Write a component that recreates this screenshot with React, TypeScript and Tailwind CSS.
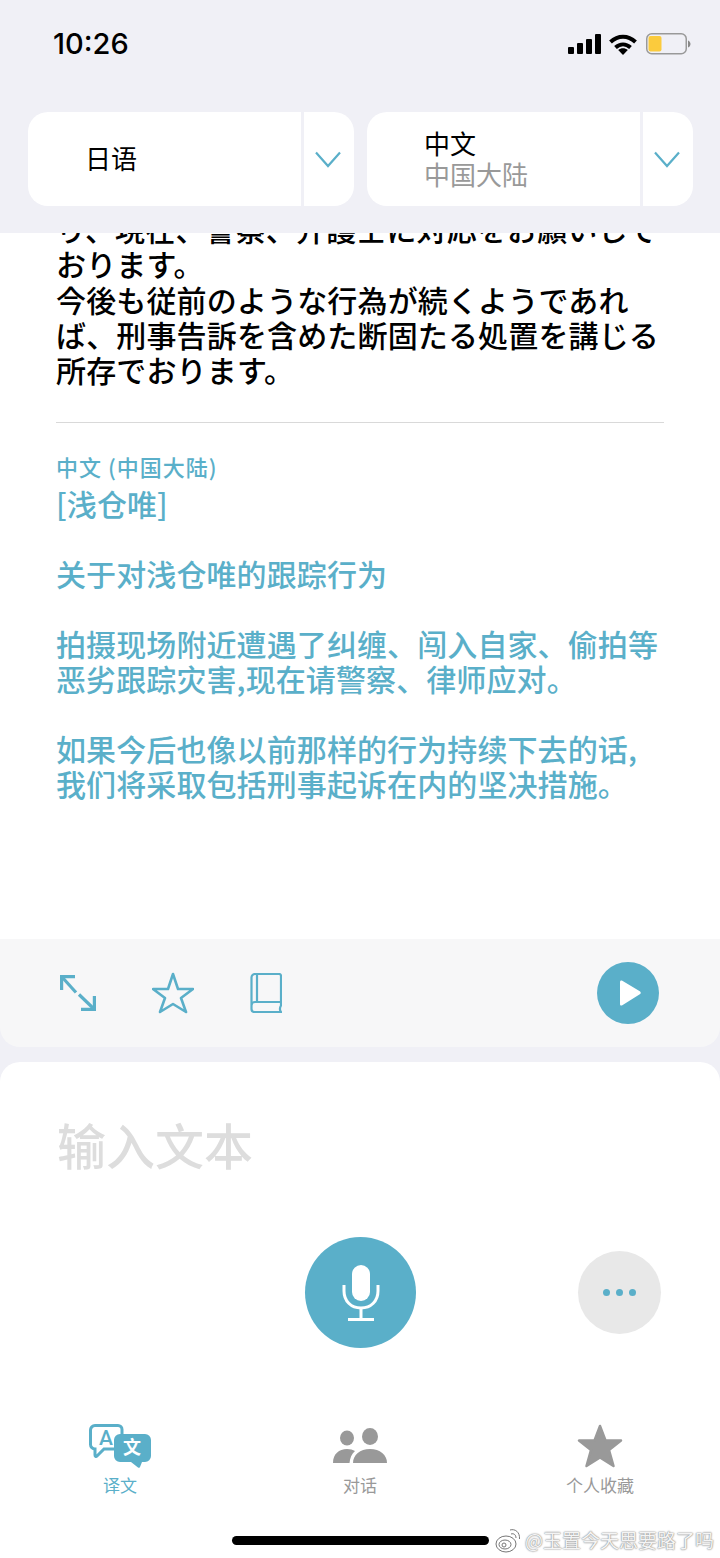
const jp = { fontFamily: '"Noto Sans CJK JP", "Noto Sans", sans-serif' };

function Chevron() {
  return (
    <svg width="26" height="17" viewBox="0 0 26 17" fill="none" stroke="#5aafc9" strokeWidth="2.200">
      <path d="M1 1.500L13 15 25 1.500" />
    </svg>
  );
}

function LangPicker({ title, sub }: { title: string; sub?: string }) {
  return (
    <div className="flex h-[94px] w-[326px] items-stretch rounded-[20px] bg-white">
      <div className="flex flex-1 flex-col justify-center pb-[3px] pl-[57px]">
        <div className="text-[26px] leading-[31px] text-black">{title}</div>
        {sub && <div className="text-[26px] leading-[31px] text-[#999999]">{sub}</div>}
      </div>
      <div className="w-[3px] bg-[#f0f0f6]" />
      <div className="flex w-[50px] items-center justify-center pr-[3px]">
        <Chevron />
      </div>
    </div>
  );
}

function StatusIcons() {
  return (
    <div className="flex items-center">
      <svg width="34" height="20" viewBox="0 0 34 20" fill="#000">
        <rect x="0" y="13" width="6" height="7" rx="1" />
        <rect x="9" y="9" width="6" height="11" rx="1" />
        <rect x="18" y="5" width="6" height="15" rx="1" />
        <rect x="27" y="0" width="6" height="20" rx="1" />
      </svg>
      <svg width="28" height="21" viewBox="0 0 28 21" fill="none" stroke="#000" strokeWidth="4" className="ml-[7px]">
        <path d="M1.500 8C9 .9 19 .9 26.500 8" />
        <path d="M6.500 13.500C11 9.500 17 9.500 21.500 13.500" />
        <path d="M14 21l-4.800-5c2.800-2.400 6.800-2.400 9.600 0z" fill="#000" stroke="none" />
      </svg>
      <svg width="45" height="22" viewBox="0 0 45 22" className="ml-[9px]">
        <rect x="0.750" y="0.750" width="39.500" height="20" rx="5" fill="#f0f0f6" stroke="#999" strokeWidth="1.500" />
        <rect x="2.500" y="3" width="13" height="15.500" rx="2" fill="#fbcb3d" />
        <path d="M42 7.500c1.500.5 2.500 2 2.500 3.500s-1 3-2.500 3.500z" fill="#888" />
      </svg>
    </div>
  );
}

function ExpandIcon() {
  return (
    <svg width="36" height="36" viewBox="0 0 36 36" fill="none" stroke="#5aafc9" strokeWidth="3.200">
      <path d="M1.600 15V1.600H15" />
      <path d="M2 2l14 15.500" />
      <path d="M34.400 21v13.400H21" />
      <path d="M34 34L19 19.500" />
    </svg>
  );
}

function StarOutline() {
  return (
    <svg width="42" height="42" viewBox="0 0 42 42" fill="none" stroke="#5aafc9" strokeWidth="2.600" strokeLinejoin="round">
      <path d="M21 2l5 15h15L29 26l5 14-13-8-13 8 5-14L1 17h15z" />
    </svg>
  );
}

function BookIcon() {
  return (
    <svg width="32" height="40" viewBox="0 0 32 40" fill="none" stroke="#5aafc9" strokeWidth="2.200">
      <path d="M31 29V3a2 2 0 0 0-2-2H5a3.500 3.500 0 0 0-3.500 3.500V36a3 3 0 0 0 3 3H31c-1.500-2-1.500-4 0-6.500V29H5a3.500 3.500 0 0 0-3.500 3.500" />
      <path d="M7 1.500V29" />
    </svg>
  );
}

function TranslateIcon() {
  return (
    <svg width="62" height="44" viewBox="0 0 62 44">
      <path
        d="M6 1.500h23a4 4 0 0 1 4 4V25H15l-7 7c-1 1-2 .5-2-1v-6a4.500 4.500 0 0 1-4.500-4.500V6A4.500 4.500 0 0 1 6 1.500z"
        fill="#fff"
        stroke="#5aafc9"
        strokeWidth="3"
      />
      <text x="17" y="21" fontSize="21" fontWeight="500" fill="#5aafc9" textAnchor="middle" fontFamily="Roboto, sans-serif">
        A
      </text>
      <path
        d="M31 10h25a6 6 0 0 1 6 6v16a6 6 0 0 1-6 6h-3l-2 5c-.5 1-1.500 1-2 .5L42 38H31a6 6 0 0 1-6-6V16a6 6 0 0 1 6-6z"
        fill="#5aafc9"
      />
      <text x="43" y="30" fontSize="18" fontWeight="700" fill="#fff" textAnchor="middle" fontFamily='"Noto Sans CJK SC", sans-serif'>
        文
      </text>
    </svg>
  );
}

function PeopleIcon() {
  return (
    <svg width="54" height="36" viewBox="0 0 54 36" fill="#999">
      <ellipse cx="14" cy="10" rx="7" ry="7.500" />
      <ellipse cx="37" cy="8.500" rx="8" ry="8.500" />
      <path d="M0 35c0-9 6-14 14-14 3 0 6 .8 8 2-3.500 3-5 7-5.500 12z" />
      <path d="M20 35c0-8 7-14 17-14s17 6 17 14z" />
    </svg>
  );
}

function StarSolid() {
  return (
    <svg width="46" height="44" viewBox="0 0 46 44" fill="#999" stroke="#999" strokeWidth="2.500" strokeLinejoin="round">
      <path d="M23 2l5.500 14.500h15.500L32 26l4.500 16L23 33.500 9.500 42 14 26 2 16.500h15.500z" />
    </svg>
  );
}

function TabItem({ icon, label, active }: { icon: React.ReactNode; label: string; active?: boolean }) {
  return (
    <div className="flex w-[160px] flex-col items-center">
      <div className="flex h-[44px] items-center">{icon}</div>
      <div className={`mt-[5px] text-[17px] leading-[24px] ${active ? "text-[#5aafc9]" : "text-[#999999]"}`}>{label}</div>
    </div>
  );
}

function WeiboMark() {
  return (
    <svg width="28" height="28" viewBox="0 0 28 28" fill="none" stroke="#777" strokeWidth="1">
      <ellipse cx="11" cy="18" rx="10" ry="8" />
      <ellipse cx="10" cy="18.500" rx="6" ry="4.500" />
      <circle cx="9" cy="19" r="2" />
      <path d="M15 4c5-1.500 10 2 9.500 9" />
      <path d="M16 8c3-1 5 1 5 4" />
    </svg>
  );
}

export default function App() {
  return (
    <div
      className="relative flex h-[1558px] w-[720px] flex-col overflow-hidden bg-[#f0f0f6]"
      style={{ fontFamily: '"Noto Sans CJK SC", "Noto Sans", sans-serif' }}
    >
      {/* status bar + language pickers */}
      <header className="z-10 h-[233px] shrink-0 bg-[#f0f0f6]">
        <div className="flex h-[112px] items-start justify-between pl-[53px] pr-[29px] pt-[26px]">
          <span className="text-[29px] font-medium leading-[36px] text-black" style={{ fontFamily: "Inter, sans-serif" }}>
            10:26
          </span>
          <div className="pt-[7px]">
            <StatusIcons />
          </div>
        </div>
        <div className="flex gap-[13px] pl-[28px]">
          <LangPicker title="日语" />
          <LangPicker title="中文" sub="中国大陆" />
        </div>
      </header>

      {/* translation result */}
      <main className="h-[706px] shrink-0 overflow-hidden bg-white px-[56px]">
        <div className="-mt-[22px] text-[30px] font-medium leading-[35.300px] tracking-[0.150px] text-black" style={jp}>
          <p className="whitespace-nowrap">り、現在、警察、弁護士に対応をお願いして</p>
          <p>おります。</p>
          <p className="whitespace-nowrap">今後も従前のような行為が続くようであれ</p>
          <p className="whitespace-nowrap">ば、刑事告訴を含めた断固たる処置を講じる</p>
          <p>所存でおります。</p>
        </div>
        <hr className="mt-[35px] border-t border-[#d9d9d9]" />
        <div className="mt-[29px] text-[22px] font-medium leading-[28px] tracking-[1px] text-[#5aafc9]">中文 (中国大陆)</div>
        <div className="text-[30px] font-medium leading-[35px] tracking-[0.100px] text-[#5aafc9]">
          <p className="mt-[6px]">[浅仓唯]</p>
          <p className="mt-[35px]">关于对浅仓唯的跟踪行为</p>
          <p className="mt-[35px] whitespace-nowrap">拍摄现场附近遭遇了纠缠、闯入自家、偷拍等</p>
          <p className="whitespace-nowrap">恶劣跟踪灾害,现在请警察、律师应对。</p>
          <p className="mt-[35px] whitespace-nowrap">如果今后也像以前那样的行为持续下去的话,</p>
          <p className="whitespace-nowrap">我们将采取包括刑事起诉在内的坚决措施。</p>
        </div>
      </main>

      {/* result actions */}
      <section className="flex h-[108px] shrink-0 items-center rounded-b-[20px] bg-[#f7f7f8] pl-[60px] pr-[61px]">
        <ExpandIcon />
        <div className="ml-[56px]">
          <StarOutline />
        </div>
        <div className="ml-[56px]">
          <BookIcon />
        </div>
        <button className="ml-auto flex h-[62px] w-[62px] items-center justify-center rounded-full bg-[#5aafc9]">
          <svg width="24" height="26" viewBox="0 0 24 26" fill="#fff" className="ml-[3px]">
            <path d="M2 2c0-1.500 1-2 2.300-1.300l17.500 10.500c1.300.8 1.300 2.300 0 3.100L4.300 25.300C3 26 2 25.500 2 24z" />
          </svg>
        </button>
      </section>

      {/* input panel */}
      <section className="mt-[15px] flex flex-1 flex-col rounded-t-[20px] bg-white">
        <div className="pl-[57px] pt-[52px] text-[49px] font-medium leading-[60px] text-[#dddddd]">输入文本</div>
        <div className="relative mt-[63px] flex h-[111px] justify-center pl-[1px]">
          <button className="flex h-[111px] w-[111px] items-center justify-center rounded-full bg-[#5aafc9]">
            <svg width="38" height="56" viewBox="0 0 38 56" fill="none">
              <rect x="10" y="0" width="18" height="36" rx="9" fill="#fff" />
              <path d="M2 20v6c0 10 7 17 17 17s17-7 17-17v-6" stroke="#fff" strokeWidth="3" />
              <path d="M19 43v10M6 54.500h26" stroke="#fff" strokeWidth="3" />
            </svg>
          </button>
          <button className="absolute left-[578px] top-[14px] flex h-[83px] w-[83px] items-center justify-center gap-[6px] rounded-full bg-[#e8e8e8]">
            <span className="h-[7px] w-[7px] rounded-full bg-[#5aafc9]" />
            <span className="h-[7px] w-[7px] rounded-full bg-[#5aafc9]" />
            <span className="h-[7px] w-[7px] rounded-full bg-[#5aafc9]" />
          </button>
        </div>
        <nav className="mt-[76px] flex justify-between px-[40px]">
          <TabItem icon={<TranslateIcon />} label="译文" active />
          <TabItem icon={<PeopleIcon />} label="对话" />
          <TabItem icon={<StarSolid />} label="个人收藏" />
        </nav>
      </section>

      {/* home indicator + repost credit */}
      <div className="absolute left-[232px] top-[1536px] h-[9px] w-[257px] rounded-full bg-black" />
      <div className="absolute left-[495px] top-[1526px] flex items-center gap-[2px]">
        <WeiboMark />
        <span
          className="whitespace-nowrap text-[19px] leading-[28px] text-[#f4f4f4]"
          style={{ textShadow: "0 0 2px #888, 0 0 1px #888" }}
        >
          @玉置今天思要路了吗
        </span>
      </div>
    </div>
  );
}
